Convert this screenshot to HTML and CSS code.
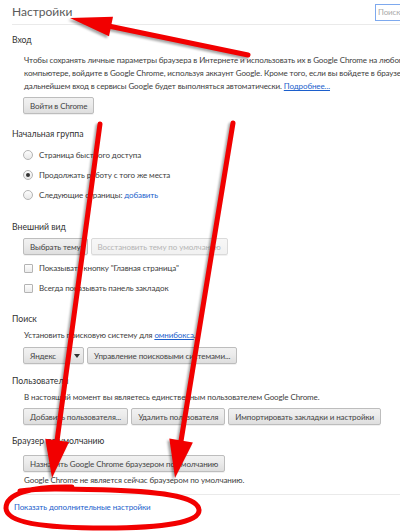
FILE: index.html
```html
<!DOCTYPE html>
<html lang="ru">
<head>
<meta charset="utf-8">
<title>Настройки</title>
<link rel="stylesheet" href="styles.css">
</head>
<body>
<div class="page">
  <header class="top">
    <h1 class="title">Настройки</h1>
    <div class="search">Поиск</div>
  </header>

  <section class="sec sec-login">
    <h2 class="head">Вход</h2>
    <div class="body">
      <p class="para">
        <span class="ln">Чтобы сохранять личные параметры браузера в Интернете и использовать их в Google Chrome на любом</span>
        <span class="ln">компьютере, войдите в Google Chrome, используя аккаунт Google. Кроме того, если вы войдете в браузере, в</span>
        <span class="ln">дальнейшем вход в сервисы Google будет выполняться автоматически. <a class="link ul">Подробнее...</a></span>
      </p>
      <div class="btns btns-login"><span class="btn">Войти в Chrome</span></div>
    </div>
  </section>

  <section class="sec sec-start">
    <h2 class="head">Начальная группа</h2>
    <div class="body">
      <div class="opt"><span class="radio"></span>Страница быстрого доступа</div>
      <div class="opt"><span class="radio on"></span>Продолжать работу с того же места</div>
      <div class="opt"><span class="radio"></span>Следующие страницы:&nbsp;<a class="link">добавить</a></div>
    </div>
  </section>

  <section class="sec sec-look">
    <h2 class="head">Внешний вид</h2>
    <div class="body">
      <div class="btns btns-look"><span class="btn">Выбрать тему</span><span class="btn off">Восстановить тему по умолчанию</span></div>
      <div class="opt opt-check"><span class="check"></span>Показывать кнопку "Главная страница"</div>
      <div class="opt opt-check"><span class="check"></span>Всегда показывать панель закладок</div>
    </div>
  </section>

  <section class="sec sec-search">
    <h2 class="head">Поиск</h2>
    <div class="body">
      <p class="line">Установить поисковую систему для <a class="link ul">омнибокса</a>.</p>
      <div class="btns btns-search"><span class="btn select"><span class="sel-text">Яндекс</span><span class="sel-arrow"></span></span><span class="btn">Управление поисковыми системами...</span></div>
    </div>
  </section>

  <section class="sec sec-users">
    <h2 class="head">Пользователи</h2>
    <div class="body">
      <p class="line">В настоящий момент вы являетесь единственным пользователем Google Chrome.</p>
      <div class="btns btns-users"><span class="btn">Добавить пользователя...</span><span class="btn">Удалить пользователя</span><span class="btn">Импортировать закладки и настройки</span></div>
    </div>
  </section>

  <section class="sec sec-default">
    <h2 class="head">Браузер по умолчанию</h2>
    <div class="body">
      <div class="btns btns-default"><span class="btn">Назначить Google Chrome браузером по умолчанию</span></div>
      <p class="line line-default">Google Chrome не является сейчас браузером по умолчанию.</p>
    </div>
  </section>

  <footer class="foot">
    <a class="link">Показать дополнительные настройки</a>
  </footer>
</div>

<svg class="marks" viewBox="0 0 400 532" width="400" height="532" aria-hidden="true">
  <g class="arrows">
    <line x1="248" y1="55" x2="111" y2="26.5" />
    <polygon points="70,18 113,16.7 109,36.3" />
    <line x1="100" y1="124" x2="57" y2="441" />
    <polygon points="52,478 45.2,438.7 69,441.9" />
    <line x1="233" y1="123" x2="181" y2="441" />
    <polygon points="175,478 169.3,438.6 192.9,442.4" />
  </g>
  <path class="ring" d="M 72 487 C 30 486, 6 494, 6 508 C 6 522, 40 528, 105 528 C 165 528, 200 522, 199 510 C 198 498, 170 492, 110 490 C 70 489, 40 488, 20 491" />
</svg>
</body>
</html>
```

FILE: styles.css
```css
html, body {
  margin: 0;
  padding: 0;
  background: #fff;
  overflow: hidden;
}

body {
  width: 400px;
  height: 532px;
  position: relative;
  font-family: Lato, "Open Sans", sans-serif;
  font-size: 8px;
  letter-spacing: -0.1px;
  color: #3c3c3c;
}

.page {
  width: 440px;
}

.top {
  display: flex;
  align-items: flex-start;
  height: 24px;
  margin-left: 12px;
  border-bottom: 1px solid #eaeaea;
}

.title {
  margin: 0;
  padding-top: 3px;
  font-size: 12px;
  line-height: 18px;
  font-weight: normal;
  letter-spacing: 0;
  color: #5a5a5a;
  flex: 1;
}

.search {
  margin-top: 4px;
  margin-right: 5px;
  width: 60px;
  height: 17px;
  box-sizing: border-box;
  border: 1px solid #7ea9ee;
  padding-left: 2px;
  font-size: 8px;
  line-height: 15px;
  color: #aaa;
}

.sec {
  margin-left: 12px;
}

.head {
  margin: 0;
  font-size: 8.7px;
  line-height: 16px;
  font-weight: normal;
  letter-spacing: 0;
  color: #333;
}

.body {
  margin-left: 12px;
}

.para {
  margin: 6px 0 0;
  line-height: 13px;
}

.ln {
  display: block;
  white-space: nowrap;
}

.line {
  margin: 0;
  line-height: 13px;
  white-space: nowrap;
}

.link {
  color: #1c5fcc;
}

.ul {
  text-decoration: underline;
}

.btns {
  display: flex;
  gap: 3px;
}

.btn {
  display: inline-flex;
  align-items: center;
  height: 17px;
  box-sizing: border-box;
  padding: 0 6px;
  margin-left: -1px;
  border: 1px solid #bdbdbd;
  border-radius: 2px;
  background: linear-gradient(#f1f1f1, #ececec 40%, #dedede);
  box-shadow: 0 1px 0 rgba(0, 0, 0, 0.06);
  color: #444;
  white-space: nowrap;
}

.btns .btn + .btn {
  margin-left: 0;
}

.btn.off {
  color: #b5b5b5;
  border-color: #dadada;
  background: linear-gradient(#f7f7f7, #f1f1f1);
}

.btn.select {
  padding: 0;
}

.sel-text {
  padding: 0 14px 0 6px;
}

.sel-arrow {
  align-self: stretch;
  width: 12px;
  border-left: 1px solid #cfcfcf;
  position: relative;
}

.sel-arrow::after {
  content: "";
  position: absolute;
  left: 3px;
  top: 6px;
  border-left: 3px solid transparent;
  border-right: 3px solid transparent;
  border-top: 4px solid #333;
}

.opt {
  display: flex;
  align-items: center;
  height: 20px;
  white-space: nowrap;
}

.radio {
  width: 10px;
  height: 10px;
  box-sizing: border-box;
  border: 1px solid #b4b4b4;
  border-radius: 50%;
  background: linear-gradient(#fdfdfd, #e8e8e8);
  margin: 0 6px 0 -1px;
  display: flex;
  align-items: center;
  justify-content: center;
}

.radio.on::after {
  content: "";
  width: 4px;
  height: 4px;
  border-radius: 50%;
  background: #333;
}

.check {
  width: 9px;
  height: 9px;
  box-sizing: border-box;
  border: 1px solid #b4b4b4;
  border-radius: 1px;
  background: linear-gradient(#fdfdfd, #ececec);
  margin: 0 6px 0 0;
}

/* vertical rhythm */
.sec-login { margin-top: 7px; }
.btns-login { margin-top: 4px; }
.sec-start { margin-top: 12px; }
.sec-start .body { margin-top: 3px; }
.sec-look { margin-top: 14px; }
.btns-look { margin-top: 3px; }
.btns-look + .opt-check { margin-top: 3px; }
.sec-search { margin-top: 13px; }
.sec-search .line { margin-top: 2px; }
.btns-search { margin-top: 5px; }
.sec-users { margin-top: 9px; }
.sec-users .line { margin-top: 2px; }
.btns-users { margin-top: 4px; }
.sec-default { margin-top: 8px; }
.btns-default { margin-top: 6px; }
.line-default { margin-top: 2px; }

.foot {
  margin: 7px 0 0 12px;
  border-top: 1px solid #eaeaea;
  padding: 6px 0 0 2px;
  line-height: 13px;
}

.marks {
  position: absolute;
  left: 0;
  top: 0;
  pointer-events: none;
}

.arrows {
  filter: drop-shadow(-2px 2px 1px rgba(0, 0, 0, 0.35));
}

.arrows line {
  stroke: #f20000;
  stroke-width: 5;
  stroke-linecap: round;
}

.arrows polygon {
  fill: #f20000;
}

.ring {
  fill: none;
  stroke: #f20000;
  stroke-width: 5;
  stroke-linecap: round;
}
```
